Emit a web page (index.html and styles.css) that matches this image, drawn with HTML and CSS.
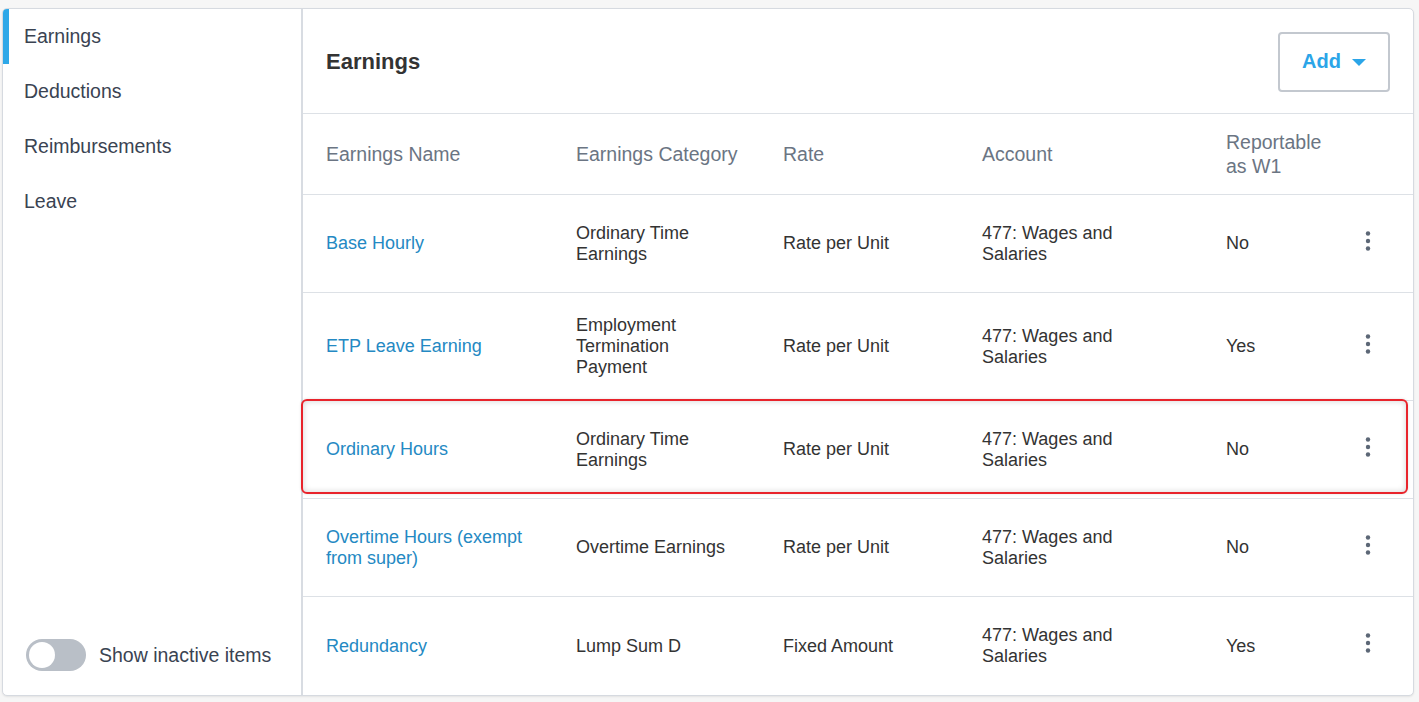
FILE: index.html
```html
<!DOCTYPE html>
<html lang="en">
<head>
  <meta charset="UTF-8" />
  <meta name="viewport" content="width=device-width, initial-scale=1.0">
  <title>Pay Items - Earnings</title>
  <link rel="stylesheet" href="styles.css">
</head>
<body>
  <div class="card">
    <aside class="sidebar">
      <nav class="side-nav">
        <a class="side-item active" href="#">Earnings</a>
        <a class="side-item" href="#">Deductions</a>
        <a class="side-item" href="#">Reimbursements</a>
        <a class="side-item" href="#">Leave</a>
      </nav>
      <label class="toggle-row">
        <span class="toggle"><span class="toggle-knob"></span></span>
        <span class="toggle-label">Show inactive items</span>
      </label>
    </aside>

    <main class="main">
      <div class="main-header">
        <h1 class="title">Earnings</h1>
        <button class="add-button" type="button">
          Add
          <svg class="caret" width="14" height="7" viewBox="0 0 14 7"><path d="M0 0h14L7 7z" fill="currentColor"/></svg>
        </button>
      </div>

      <div class="table">
        <div class="row head">
          <div>Earnings Name</div>
          <div>Earnings Category</div>
          <div>Rate</div>
          <div>Account</div>
          <div>Reportable as W1</div>
          <div></div>
        </div>

        <div class="row">
          <div><a class="link" href="#">Base Hourly</a></div>
          <div>Ordinary Time Earnings</div>
          <div>Rate per Unit</div>
          <div>477: Wages and Salaries</div>
          <div>No</div>
          <div class="menu"><svg width="6" height="20" viewBox="0 0 6 20"><circle cx="3" cy="2.5" r="2.2"/><circle cx="3" cy="10" r="2.2"/><circle cx="3" cy="17.5" r="2.2"/></svg></div>
        </div>

        <div class="row">
          <div><a class="link" href="#">ETP Leave Earning</a></div>
          <div>Employment Termination Payment</div>
          <div>Rate per Unit</div>
          <div>477: Wages and Salaries</div>
          <div>Yes</div>
          <div class="menu"><svg width="6" height="20" viewBox="0 0 6 20"><circle cx="3" cy="2.5" r="2.2"/><circle cx="3" cy="10" r="2.2"/><circle cx="3" cy="17.5" r="2.2"/></svg></div>
        </div>

        <div class="row selected">
          <div><a class="link" href="#">Ordinary Hours</a></div>
          <div>Ordinary Time Earnings</div>
          <div>Rate per Unit</div>
          <div>477: Wages and Salaries</div>
          <div>No</div>
          <div class="menu"><svg width="6" height="20" viewBox="0 0 6 20"><circle cx="3" cy="2.5" r="2.2"/><circle cx="3" cy="10" r="2.2"/><circle cx="3" cy="17.5" r="2.2"/></svg></div>
        </div>

        <div class="row">
          <div><a class="link" href="#">Overtime Hours (exempt from super)</a></div>
          <div>Overtime Earnings</div>
          <div>Rate per Unit</div>
          <div>477: Wages and Salaries</div>
          <div>No</div>
          <div class="menu"><svg width="6" height="20" viewBox="0 0 6 20"><circle cx="3" cy="2.5" r="2.2"/><circle cx="3" cy="10" r="2.2"/><circle cx="3" cy="17.5" r="2.2"/></svg></div>
        </div>

        <div class="row">
          <div><a class="link" href="#">Redundancy</a></div>
          <div>Lump Sum D</div>
          <div>Fixed Amount</div>
          <div>477: Wages and Salaries</div>
          <div>Yes</div>
          <div class="menu"><svg width="6" height="20" viewBox="0 0 6 20"><circle cx="3" cy="2.5" r="2.2"/><circle cx="3" cy="10" r="2.2"/><circle cx="3" cy="17.5" r="2.2"/></svg></div>
        </div>
      </div>
    </main>
  </div>
</body>
</html>
```

FILE: styles.css
```css
* {
  margin: 0;
  padding: 0;
  box-sizing: border-box;
}

body {
  font-family: 'Liberation Sans', Arial, sans-serif;
  background: #f6f6f6;
  color: #333;
  padding: 8px 5px 6px 2px;
}

.card {
  display: flex;
  height: 688px;
  background: #fff;
  border: 1px solid #d6dae0;
  border-radius: 5px;
  box-shadow: 0 1px 2px rgba(0, 0, 0, 0.08);
  overflow: hidden;
}

/* left navigation */
.sidebar {
  width: 300px;
  flex-shrink: 0;
  border-right: 2px solid #d8dce2;
  display: flex;
  flex-direction: column;
}

.side-nav {
  display: flex;
  flex-direction: column;
}

.side-item {
  display: flex;
  align-items: center;
  height: 55px;
  padding-left: 15px;
  border-left: 6px solid transparent;
  color: #3a4352;
  font-size: 19.5px;
  text-decoration: none;
}

.side-item.active {
  border-left-color: #2ea8e8;
}

.toggle-row {
  margin-top: auto;
  display: flex;
  align-items: center;
  gap: 13px;
  padding: 0 0 24px 23px;
  cursor: pointer;
}

.toggle {
  position: relative;
  width: 60px;
  height: 32px;
  border-radius: 16px;
  background: #b9bfc7;
}

.toggle-knob {
  position: absolute;
  top: 3px;
  left: 3px;
  width: 26px;
  height: 26px;
  border-radius: 50%;
  background: #fff;
}

.toggle-label {
  font-size: 19.5px;
  color: #3a4352;
}

/* main panel */
.main {
  flex: 1;
  display: flex;
  flex-direction: column;
}

.main-header {
  height: 107px;
  display: flex;
  align-items: center;
  justify-content: space-between;
  padding: 0 23px 0 23px;
  border-bottom: 1px solid #dde1e6;
}

.title {
  font-size: 22px;
  font-weight: 700;
  color: #333;
  margin-top: 2px;
}

.add-button {
  display: flex;
  align-items: center;
  justify-content: center;
  gap: 11px;
  width: 112px;
  height: 60px;
  background: #fff;
  border: 2px solid #c3c8cf;
  border-radius: 4px;
  color: #2ba5e8;
  font-family: inherit;
  font-size: 20px;
  font-weight: 700;
  cursor: pointer;
  margin-top: 1px;
}

.caret {
  margin-top: 2px;
}

.table {
  display: flex;
  flex-direction: column;
}

.row {
  display: grid;
  grid-template-columns: 250px 207px 199px 244px 1fr 40px;
  align-items: center;
  min-height: 98px;
  padding: 22px 25px 22px 23px;
  border-bottom: 1px solid #dde1e6;
  font-size: 18px;
  line-height: 21px;
  color: #333;
  position: relative;
}

.row > div {
  padding-right: 30px;
}

.row > div:nth-child(2) {
  padding-right: 40px;
}

.row > div:nth-child(4) {
  padding-right: 80px;
}

.row > div:nth-child(5) {
  padding-right: 20px;
}

.row.head {
  min-height: 81px;
  padding-top: 16px;
  padding-bottom: 16px;
  font-size: 19.5px;
  line-height: 24px;
  color: #6b7583;
}

.row:last-child {
  border-bottom: none;
}

.link {
  color: #2489c3;
  text-decoration: none;
}

.menu {
  display: flex;
  justify-content: center;
  padding-right: 0 !important;
  margin-top: -6px;
}

.menu svg {
  fill: #5c6776;
}

/* highlighted row frame */
.row.selected::after {
  content: '';
  position: absolute;
  top: -2px;
  bottom: 4px;
  left: -2px;
  right: 5px;
  border: 2px solid #e8232b;
  border-radius: 6px;
  box-shadow: inset 0 0 6px rgba(0, 0, 0, 0.18), 0 0 3px rgba(0, 0, 0, 0.12);
  pointer-events: none;
}
```
